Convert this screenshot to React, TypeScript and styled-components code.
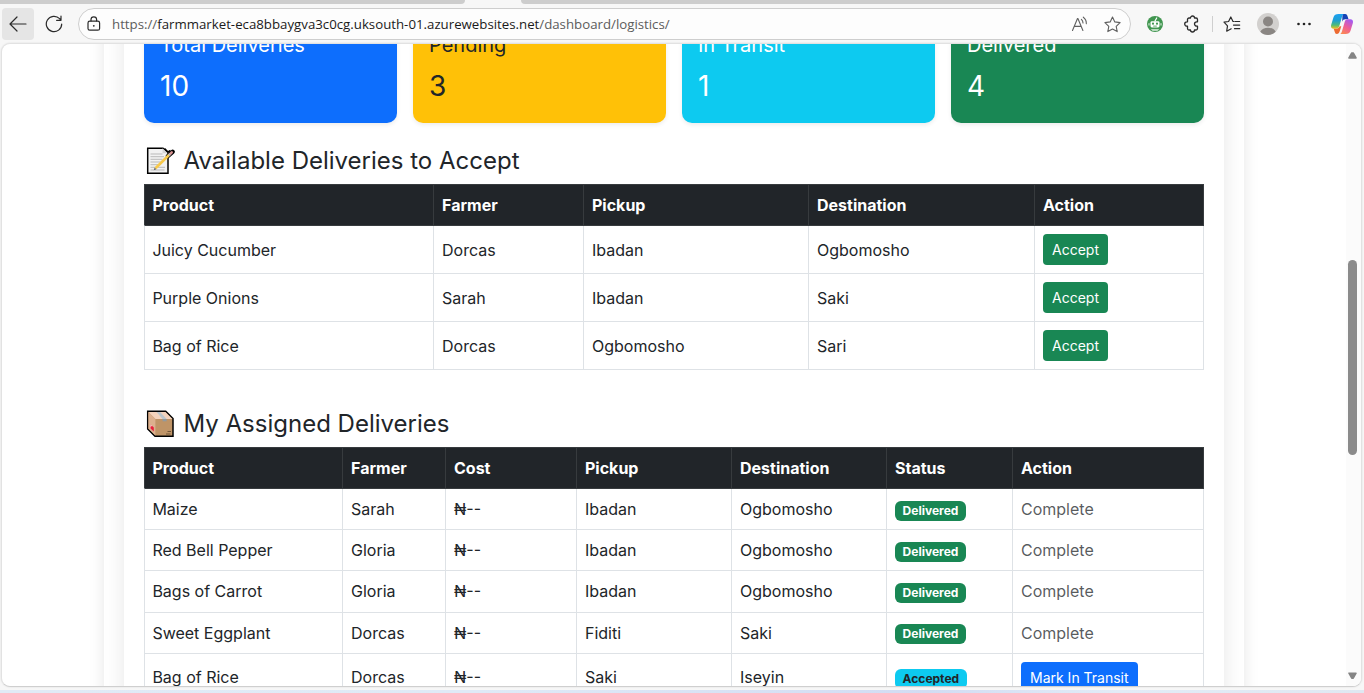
import React from "react";
import styled, { createGlobalStyle, css } from "styled-components";

const GlobalStyle = createGlobalStyle`
  *, *::before, *::after { box-sizing: border-box; }
  body { margin: 0; overflow: hidden; background: #f7f7f7; }
`;

const inter = `Inter, "Liberation Sans", sans-serif`;

/* ---------- browser window ---------- */

const Window = styled.div`
  width: 1364px;
  height: 693px;
  display: flex;
  flex-direction: column;
  background: #f7f7f7;
  overflow: hidden;
`;

const TabStrip = styled.div`
  display: flex;
  gap: 56px;
  height: 4px;
  flex: none;
`;

const InactiveTabs = styled.div<{ $width?: number }>`
  background: #cdcdcd;
  ${(p) =>
    p.$width
      ? css`width: ${p.$width}px; border-bottom-right-radius: 5px;`
      : css`flex: 1; border-bottom-left-radius: 5px;`}
`;

const Toolbar = styled.div`
  display: flex;
  align-items: center;
  height: 39px;
  flex: none;
  padding: 1px 0 0 2px;
`;

const BackButton = styled.div`
  width: 32px;
  height: 32px;
  flex: none;
  display: flex;
  align-items: center;
  justify-content: center;
  background: #e5e5e5;
  border-radius: 4px;
`;

const ToolIcon = styled.div<{ $width: number }>`
  width: ${(p) => p.$width}px;
  height: 32px;
  flex: none;
  display: flex;
  align-items: center;
  justify-content: center;
`;

const AddressBar = styled.div`
  width: 1053px;
  height: 32px;
  flex: none;
  margin-left: 4px;
  padding: 0 2px 0 8px;
  display: flex;
  align-items: center;
  border: 1px solid #cecece;
  border-radius: 16px;
  background: #fdfdfd;
`;

const Url = styled.div`
  flex: 1;
  padding-left: 11px;
  white-space: nowrap;
  font: 13.26px/20px "Open Sans", "Noto Sans", sans-serif;
  color: #5c5c5c;
`;

const Host = styled.span`
  color: #1b1b1b;
`;

const Separator = styled.div`
  width: 1px;
  height: 16px;
  background: #cfcfcf;
`;

const Viewport = styled.div`
  display: flex;
  height: 644px;
  margin: 0 2px 0 1px;
  flex: none;
  border: 1px solid #e2e2e2;
  border-bottom-color: #cfcfcf;
  border-radius: 9px;
  background: #fff;
  overflow: hidden;
  box-shadow: 0 0 2px rgba(0, 0, 0, 0.12);
`;

const Desktop = styled.div`
  height: 3px;
  margin-top: auto;
  background: linear-gradient(90deg, #e0ebf6 0%, #dfeaf7 35%, #d2dcf3 68%, #e2ecf7 82%, #dfe8f2 100%);
`;

const Page = styled.div`
  flex: 1;
  display: flex;
  justify-content: center;
  align-items: flex-start;
  padding-left: 1px;
  font-family: ${inter};
  font-size: 16px;
  line-height: 24px;
  color: #212529;
`;

const Scrollbar = styled.div`
  width: 15px;
  display: flex;
  flex-direction: column;
  align-items: center;
  padding: 7px 2px 6px 0;
  background: #fbfbfb;
`;

const Thumb = styled.div`
  width: 9px;
  height: 195px;
  margin: 201px 0 auto;
  border-radius: 5px;
  background: #8b8b8b;
`;

/* ---------- dashboard ---------- */

const OuterPanel = styled.div`
  width: 1140px;
  flex: none;
  margin-top: -87px;
  margin-right: 1px;
  padding: 20px;
  background: #fff;
  box-shadow: 0 0 15px rgba(0, 0, 0, 0.1);
`;

const InnerPanel = styled.div`
  padding: 40px 20px;
  background: #fff;
  box-shadow: 0 0 20px rgba(0, 0, 0, 0.1);
`;

const Cards = styled.div`
  display: grid;
  grid-template-columns: repeat(4, 1fr);
  gap: 16px;
`;

const Card = styled.div<{ $bg: string; $fg: string }>`
  height: 106px;
  padding: 16px;
  border-radius: 10px;
  background: ${(p) => p.$bg};
  color: ${(p) => p.$fg};
  box-shadow: 0 2px 4px rgba(0, 0, 0, 0.075);
`;

const CardTitle = styled.h5`
  margin: 0 0 8px;
  font-size: 20px;
  line-height: 24px;
  font-weight: 400;
`;

const CardValue = styled.p`
  margin: 0;
  font-size: 28px;
  line-height: 42px;
`;

const Section = styled.section<{ $gap: number }>`
  margin-top: ${(p) => p.$gap}px;
`;

const Heading = styled.h4`
  display: flex;
  align-items: center;
  gap: 9px;
  height: 28.8px;
  margin: 0 0 8px;
  padding-left: 1.5px;
  font-size: 24px;
  line-height: 28.8px;
  font-weight: 400;
`;

const Table = styled.table`
  display: block;
  border-bottom: 1px solid #dee2e6;
`;

const Group = styled.tbody`
  display: block;
`;

const Row = styled.tr<{ $cols: string; $height?: number; $dark?: boolean; $first?: boolean }>`
  display: grid;
  grid-template-columns: ${(p) => p.$cols};
  height: ${(p) => p.$height ?? 41.2}px;
  border-left: 1px solid ${(p) => (p.$dark ? "#373b3e" : "#dee2e6")};
  border-top: 1px solid ${(p) => (p.$dark || p.$first ? "#373b3e" : "#dee2e6")};
  background: ${(p) => (p.$dark ? "#212529" : "#fff")};
`;

const cell = css`
  display: flex;
  align-items: center;
  padding: 0 8px;
  text-align: left;
  white-space: nowrap;

  &:first-child {
    padding-left: 7.4px;
  }
`;

const Th = styled.th`
  ${cell}
  border-right: 1px solid #373b3e;
  color: #fff;
  font-weight: 700;
`;

const Td = styled.td<{ $drop?: boolean }>`
  ${cell}
  padding-top: ${(p) => (p.$drop ? 1 : 0)}px;
  border-right: 1px solid #dee2e6;
`;

const Button = styled.button<{ $bg: string }>`
  height: 31px;
  padding: 0 9px;
  border: 0;
  border-radius: 4px;
  background: ${(p) => p.$bg};
  color: #fff;
  font: 14px/21px ${inter};
`;

const Badge = styled.span<{ $info?: boolean }>`
  height: 20px;
  margin-top: 3px;
  padding: 0 7.6px;
  border-radius: 6px;
  background: ${(p) => (p.$info ? "#0dcaf0" : "#198754")};
  color: ${(p) => (p.$info ? "#212529" : "#fff")};
  font-size: 12px;
  line-height: 20px;
  font-weight: 700;
`;

const Muted = styled.span`
  color: rgba(33, 37, 41, 0.75);
`;

/* ---------- icons ---------- */

const line = { fill: "none", stroke: "#2b2b2b", strokeWidth: 1.2, strokeLinecap: "round", strokeLinejoin: "round" } as const;

const BackIcon = () => (
  <svg width="18" height="16" viewBox="0 0 18 16" {...line}>
    <path d="M8 1 1 8l7 7M1.2 8H17" />
  </svg>
);

const ReloadIcon = () => (
  <svg width="18" height="18" viewBox="0 0 18 18" {...line}>
    <path d="M16.7 9A7.7 7.7 0 1 1 14.6 3.7L15.8 5M16 1v4.3h-4.4" />
  </svg>
);

const LockIcon = () => (
  <svg width="14" height="16" viewBox="0 0 14 16" {...line}>
    <rect x="1" y="5.2" width="11.6" height="9" rx="1.8" />
    <path d="M4 5V3.6a2.8 2.8 0 0 1 5.6 0V5" />
    <circle cx="6.8" cy="9.8" r=".9" fill="#2b2b2b" stroke="none" />
  </svg>
);

const ReadAloudIcon = () => (
  <svg width="18" height="16" viewBox="0 0 18 16" {...line} stroke="#606060" strokeWidth="1.1">
    <path d="m1.5 14.5 5-12h.4l5 12M3.2 10.4h7M10.4 3.4q1.6 1.4 1.6 3.6M12.3 1.2q3.2 2.4 3 6.4" />
  </svg>
);

const StarIcon = () => (
  <svg width="17" height="17" viewBox="0 0 17 17" {...line} stroke="#606060" strokeWidth="1.1">
    <path d="m8.500 1 2.300 4.900 5.300.7-3.900 3.700 1 5.300-4.700-2.600-4.700 2.600 1-5.300L.9 6.600l5.300-.7z" />
  </svg>
);

const BotIcon = () => (
  <svg width="16" height="16" viewBox="0 0 16 16">
    <circle cx="8" cy="8" r="8" fill="#419650" />
    <path d="M8 5 9.700 2" stroke="#fff" strokeWidth="1.200" strokeLinecap="round" />
    <rect x="3.500" y="5.200" width="9" height="6.300" rx="1.400" fill="#fff" />
    <path d="M2 7.200v2.300M14 7.200v2.300" stroke="#fff" strokeWidth=".9" />
    <circle cx="6" cy="7.700" r="1.100" fill="#419650" />
    <circle cx="10" cy="7.700" r="1.100" fill="#419650" />
    <path d="M6.200 10.100h3.600" stroke="#419650" strokeWidth=".8" />
    <path d="M3.800 13.300h8.400L10.500 14.700h-5z" fill="#e3f0e5" />
  </svg>
);

const PuzzleIcon = () => (
  <svg width="16" height="18" viewBox="0 0 16 18" {...line} strokeWidth="1.300">
    <path d="M5 3h1.500a2 2 0 0 1 4 0H12a1.500 1.500 0 0 1 1.500 1.500v2.300h-.8a2.200 2.200 0 0 0 0 4.400h.8v2.300A1.500 1.500 0 0 1 12 15h-1.500a2 2 0 0 1-4 0H5a1.500 1.500 0 0 1-1.500-1.500v-2.300h-.6a2.200 2.200 0 0 1 0-4.400h.6V4.500A1.500 1.500 0 0 1 5 3z" />
  </svg>
);

const FavoritesIcon = () => (
  <svg width="18" height="17" viewBox="0 0 18 17" {...line} strokeWidth="1.200">
    <path d="M10.800 5.500H10L7.800 1 5.600 5.500 1 6.200l3.500 3.600-.8 5.400 4.500-2.400M12 5.500h4.700M10.500 9.100h6.200M11.500 12.700h5.200" />
  </svg>
);

const AvatarIcon = () => (
  <svg width="22" height="22" viewBox="0 0 22 22">
    <circle cx="11" cy="11" r="11" fill="#d2d0ce" />
    <circle cx="11" cy="8.500" r="5" fill="#8a8683" />
    <path d="M3.300 18.800C4.600 16 7.500 14.700 11 14.700s6.400 1.300 7.700 4.100A11 11 0 0 1 11 22a11 11 0 0 1-7.700-3.200z" fill="#8a8683" />
  </svg>
);

const MoreIcon = () => (
  <svg width="16" height="4" viewBox="0 0 16 4" fill="#222">
    <circle cx="2.500" cy="2" r="1.300" />
    <circle cx="8" cy="2" r="1.300" />
    <circle cx="13.500" cy="2" r="1.300" />
  </svg>
);

const CopilotIcon = () => (
  <svg width="22" height="20" viewBox="0 0 22 20">
    <defs>
      <linearGradient id="cpBlue" x1="0" y1="0" x2="0" y2="1">
        <stop offset="0" stopColor="#1ba0f2" />
        <stop offset=".45" stopColor="#1f9fd0" />
        <stop offset=".75" stopColor="#4dbb7c" />
        <stop offset="1" stopColor="#f0c419" />
      </linearGradient>
      <linearGradient id="cpPink" x1=".7" y1="0" x2=".2" y2="1">
        <stop offset="0" stopColor="#a55af0" />
        <stop offset=".5" stopColor="#ee5d98" />
        <stop offset="1" stopColor="#fb8a50" />
      </linearGradient>
    </defs>
    <path d="M11.500 0h2.600c1.700 0 2.100 1 2.700 3l.7 2.300h-3.300c-1.600 0-2.400.8-3 2.500z" fill="#1543b5" />
    <path d="M7.500 0h5.300c-1 .5-1.500 1.700-2 3.500L8.400 11.800c-.6 2-1.500 2.900-3.200 2.900H2.500C.4 14.700-.4 13 .2 10.800L2.500 3.300C3.200 1.100 4.800 0 7.500 0z" fill="url(#cpBlue)" />
    <path d="M10.300 12.200 8.800 17c-.6 2-1.500 3-3 3-1.200 0-1.700-.8-2.200-2.500l-.9-2.800h2.700c1.700 0 2.700-.9 3.200-2.500z" fill="#ed6b32" />
    <path d="M14.500 20H9.200c1-.5 1.500-1.700 2-3.500l2.400-8.300c.6-2 1.500-2.900 3.200-2.900h2.700c2.100 0 2.900 1.700 2.300 3.900l-2.300 7.500c-.7 2.200-2.300 3.300-5 3.300z" fill="url(#cpPink)" />
  </svg>
);

const Arrow = ({ down }: { down?: boolean }) => (
  <svg width="9" height="8" viewBox="0 0 9 8" fill="#858585" stroke="#858585" strokeWidth="1.600" strokeLinejoin="round">
    <path d={down ? "M1 1.200h7L5.200 6.200H3.800z" : "M1 7h7L5.200 2H3.800z"} />
  </svg>
);

const MemoIcon = () => (
  <svg width="29" height="28" viewBox="0 0 29 28">
    <path d="M1.700 1.200H17l5 4.800v20.300H1.700z" fill="#f2f2f2" stroke="#000" strokeWidth="1.500" />
    <path d="M16.500 1.300v5H22" fill="#d5d5d5" />
    <path d="M4.500 7h12M4.500 9.700h13.500M4.500 12.300h12M4.500 15h10M4.500 17.700h8M4.500 20.300h5M12 20.300h7M4.500 23h14" stroke="#b9b9b9" strokeWidth="1" />
    <path d="M18.500 1.500 22 5l2.500-1.500" fill="none" stroke="#000" strokeWidth="1.600" />
    <path d="m22 9 4.600-4.200" stroke="#000" strokeWidth="4.400" strokeLinecap="round" />
    <path d="M9.500 21.200 23.500 7.500" stroke="#f8c94b" strokeWidth="2.600" />
    <path d="m22.800 8.300 1.700-1.700" stroke="#b8b8b8" strokeWidth="2.400" />
    <path d="m24.500 6.600 1.300-1.300" stroke="#d99291" strokeWidth="2.400" strokeLinecap="round" />
    <path d="m7.700 23.300 1-2.700 1.700 1.600z" fill="#666" />
  </svg>
);

const PackageIcon = () => (
  <svg width="29" height="28" viewBox="0 0 29 28">
    <path d="M1.700 1.200h18l7.300 7.300v17.800H9L1.700 19z" fill="#bf9467" stroke="#000" strokeWidth="1.500" />
    <path d="M2.400 2h17l7 7H9.400z" fill="#f4d3bd" />
    <path d="m2.400 2 7 7v16.500l-7-7z" fill="#dcb08e" />
    <path d="M10.500 2h3.600l6.500 7h-4z" fill="#bcc6cc" />
    <path d="M16.600 9h4v2.300h-4z" fill="#929a9f" />
    <path d="m4.600 14.500 3.200 3v4l-3.200-3z" fill="#e81f3d" />
    <path d="m4.600 14.500 1.300 1.200-1.300 1.400z" fill="#fff" />
    <path d="M21.500 21.500h3.500M20 24h4.500" stroke="#6f5437" strokeWidth="1" />
  </svg>
);

/* ---------- data ---------- */

const stats = [
  { title: "Total Deliveries", value: 10, bg: "#0d6efd", fg: "#fff" },
  { title: "Pending", value: 3, bg: "#ffc107", fg: "#212529" },
  { title: "In Transit", value: 1, bg: "#0dcaf0", fg: "#fff" },
  { title: "Delivered", value: 4, bg: "#198754", fg: "#fff" },
];

const availableCols = "289px 150px 225px 226px 169px";
const available = [
  ["Juicy Cucumber", "Dorcas", "Ibadan", "Ogbomosho"],
  ["Purple Onions", "Sarah", "Ibadan", "Saki"],
  ["Bag of Rice", "Dorcas", "Ogbomosho", "Sari"],
];

const assignedCols = "198px 103px 131px 155px 155px 126px 191px";
const assigned = [
  { cells: ["Maize", "Sarah", "₦--", "Ibadan", "Ogbomosho"], done: true },
  { cells: ["Red Bell Pepper", "Gloria", "₦--", "Ibadan", "Ogbomosho"], done: true },
  { cells: ["Bags of Carrot", "Gloria", "₦--", "Ibadan", "Ogbomosho"], done: true },
  { cells: ["Sweet Eggplant", "Dorcas", "₦--", "Fiditi", "Saki"], done: true },
  { cells: ["Bag of Rice", "Dorcas", "₦--", "Saki", "Iseyin"], done: false },
];

const HeaderRow = ({ cols, labels }: { cols: string; labels: string[] }) => (
  <Group as="thead">
    <Row $cols={cols} $dark>
      {labels.map((l) => (
        <Th key={l}>{l}</Th>
      ))}
    </Row>
  </Group>
);

export default function App() {
  return (
    <Window>
      <GlobalStyle />
      <TabStrip>
        <InactiveTabs $width={465} />
        <InactiveTabs />
      </TabStrip>
      <Toolbar>
        <BackButton><BackIcon /></BackButton>
        <ToolIcon $width={40}><ReloadIcon /></ToolIcon>
        <AddressBar>
          <LockIcon />
          <Url>
            https://<Host>farmmarket-eca8bbaygva3c0cg.uksouth-01.azurewebsites.net</Host>/dashboard/logistics/
          </Url>
          <ToolIcon $width={32}><ReadAloudIcon /></ToolIcon>
          <ToolIcon $width={32}><StarIcon /></ToolIcon>
        </AddressBar>
        <ToolIcon $width={48}><BotIcon /></ToolIcon>
        <ToolIcon $width={26}><PuzzleIcon /></ToolIcon>
        <ToolIcon $width={14}><Separator /></ToolIcon>
        <ToolIcon $width={26}><FavoritesIcon /></ToolIcon>
        <ToolIcon $width={46}><AvatarIcon /></ToolIcon>
        <ToolIcon $width={26}><MoreIcon /></ToolIcon>
        <ToolIcon $width={50}><CopilotIcon /></ToolIcon>
      </Toolbar>
      <Viewport>
        <Page>
          <OuterPanel>
            <InnerPanel>
              <Cards>
                {stats.map((s) => (
                  <Card key={s.title} $bg={s.bg} $fg={s.fg}>
                    <CardTitle>{s.title}</CardTitle>
                    <CardValue>{s.value}</CardValue>
                  </Card>
                ))}
              </Cards>

              <Section $gap={24}>
                <Heading><MemoIcon />Available Deliveries to Accept</Heading>
                <Table>
                  <HeaderRow cols={availableCols} labels={["Product", "Farmer", "Pickup", "Destination", "Action"]} />
                  <Group>
                    {available.map((r, i) => (
                      <Row key={r[0]} $cols={availableCols} $height={48} $first={i === 0}>
                        {r.map((c, j) => (
                          <Td key={j} $drop>{c}</Td>
                        ))}
                        <Td><Button $bg="#198754">Accept</Button></Td>
                      </Row>
                    ))}
                  </Group>
                </Table>
              </Section>

              <Section $gap={40}>
                <Heading><PackageIcon />My Assigned Deliveries</Heading>
                <Table>
                  <HeaderRow
                    cols={assignedCols}
                    labels={["Product", "Farmer", "Cost", "Pickup", "Destination", "Status", "Action"]}
                  />
                  <Group>
                    {assigned.map((r, i) => (
                      <Row key={r.cells[0]} $cols={assignedCols} $height={r.done ? undefined : 48} $first={i === 0}>
                        {r.cells.map((c, j) => (
                          <Td key={j}>{c}</Td>
                        ))}
                        <Td>{r.done ? <Badge>Delivered</Badge> : <Badge $info>Accepted</Badge>}</Td>
                        <Td>{r.done ? <Muted>Complete</Muted> : <Button $bg="#0d6efd">Mark In Transit</Button>}</Td>
                      </Row>
                    ))}
                  </Group>
                </Table>
              </Section>
            </InnerPanel>
          </OuterPanel>
        </Page>
        <Scrollbar>
          <Arrow />
          <Thumb />
          <Arrow down />
        </Scrollbar>
      </Viewport>
      <Desktop />
    </Window>
  );
}
